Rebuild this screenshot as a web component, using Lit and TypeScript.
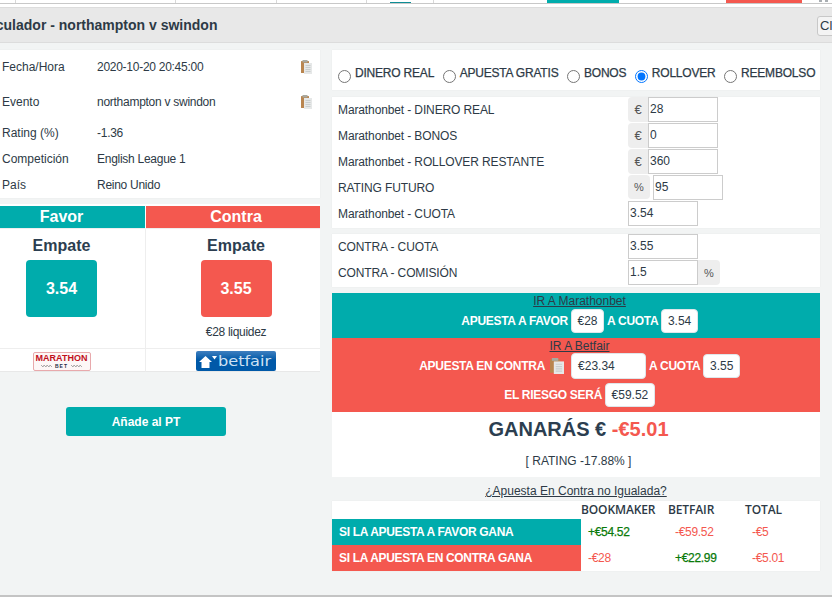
import { LitElement, html, css, svg } from "lit";
import { customElement } from "lit/decorators.js";

const clip = html`<svg class="clip" viewBox="0 0 11 14" width="11" height="14" preserveAspectRatio="none">
  <rect x="0" y="1" width="8" height="12" rx="0.5" fill="#b9854f"></rect>
  <rect x="1.5" y="0" width="5" height="2.5" fill="#a9a9a0"></rect>
  <rect x="3" y="3" width="8" height="11" fill="#e6e8e8"></rect>
  <path d="M4.5 5.5h5M4.5 7.5h5M4.5 9.5h5M4.5 11.5h5" stroke="#c9cdcd" stroke-width="1"></path>
</svg>`;

const arrow = svg`<path d="M1 9 L7.5 3 L14 9 H11.5 V15 H3.5 V9 Z" fill="#fff"></path><path d="M14 3 L19 3 L16.5 6.5 Z" fill="#fff"></path>`;

const wing = html`<svg class="wing" width="11" height="5" viewBox="0 0 11 5">
  <path d="M0 1l2 2 1-2 2 2 1-2 2 2 1-2 2 2" fill="none" stroke="#8a8a8a" stroke-width="0.7"></path>
</svg>`;

@customElement("app-root")
export class AppRoot extends LitElement {
  static styles = css`
    :host {
      display: block;
      width: 832px;
      height: 611px;
      overflow: hidden;
      background: #fff;
      font-family: "Liberation Sans", Arial, sans-serif;
      font-size: 12px;
      color: #2d3a46;
    }
    .strip {
      position: relative;
      height: 3px;
      border-bottom: 1px solid #c8c8c8;
      margin-bottom: 3px;
      overflow: hidden;
    }
    .strip i { position: absolute; top: 0; bottom: 0; }
    .strip .v { width: 1px; background: #d8d8d8; }
    .strip .t { background: #00acac; }
    .strip .d { background: #0e8d95; height: 1px; top: 2px; }
    .strip .r { background: #f4584f; }
    .strip .x { background: #a9aeb2; height: 2px; width: 3px; }
    .modal {
      width: 889px;
      margin-left: -28px;
      height: 590px;
      box-sizing: border-box;
      background: #f2f4f4;
      border-bottom: 2px solid #c4c4c4;
    }
    .head {
      height: 36px;
      box-sizing: border-box;
      background: #e8e8e8;
      border-top: 1px solid #dcdcdc;
      border-bottom: 1px solid #dcdcdc;
      display: flex;
      align-items: center;
      padding-left: 2px;
      justify-content: space-between;
    }
    .title { font-size: 14px; font-weight: bold; color: #2d3a46; white-space: nowrap; }
    .close {
      width: 44px;
      height: 20px;
      margin-top: 1px;
      padding: 0 0 0 2px;
      box-sizing: border-box;
      border: 1px solid #c8c8c8;
      border-radius: 3px;
      background: #f4f4f4;
      font-family: inherit;
      font-size: 13px;
      line-height: 18px;
      text-align: left;
      color: #2d3a46;
      overflow: hidden;
    }
    .cols {
      display: flex;
      gap: 12px;
      padding-top: 7px;
    }
    .left { width: 348px; display: flex; flex-direction: column; }
    .right { width: 488px; display: flex; flex-direction: column; }
    .card { background: #fff; box-shadow: 0 0 1px rgba(0, 0, 0, 0.08); }
    .info {
      height: 148px;
      padding-left: 30px;
      box-sizing: border-box;
      display: grid;
      grid-template-columns: 95px 204px 1fr;
      grid-template-rows: 34px 36px 26px 26px 26px;
      align-items: center;
    }
    .info .val { letter-spacing: -0.27px; }
    .clip { display: block; }
    .bets { margin-top: 6px; display: grid; grid-template-columns: 174px 174px; }
    .bets > div { box-sizing: border-box; }
    .bh {
      height: 25px;
      padding-top: 2px;
      background: #fff;
      border-bottom: 1px solid #eee;
      text-align: center;
    }
    .bh span {
      display: block;
      height: 22px;
      padding-left: 6px;
      line-height: 21px;
      color: #fff;
      font-size: 16px;
      font-weight: bold;
    }
    .bh.fav span { background: #00acac; }
    .bh.con span { background: #f4584f; }
    .bh.fav { border-right: 1px solid #fff; }
    .bb {
      height: 120px;
      padding-left: 6px;
      display: flex;
      flex-direction: column;
      align-items: center;
      background: #fff;
      border-bottom: 1px solid #eee;
    }
    .bb.fav, .bl.fav { border-right: 1px solid #eee; }
    .name { font-size: 16px; font-weight: bold; line-height: 18px; margin-top: 8px; color: #2c3e50; }
    .odd {
      width: 71px;
      height: 57px;
      margin-top: 5px;
      border-radius: 4px;
      color: #fff;
      font-size: 16px;
      font-weight: bold;
      display: flex;
      align-items: center;
      justify-content: center;
    }
    .odd.t { background: #00acac; }
    .odd.r { background: #f4584f; }
    .liq { margin-top: 8px; letter-spacing: -0.3px; }
    .bl {
      height: 23px;
      padding: 2px 0 0 6px;
      display: flex;
      justify-content: center;
      background: #fff;
      border-bottom: 1px solid #e8e8e8;
    }
    .bl.fav { padding-top: 3px; }
    .mara {
      width: 58px;
      height: 19px;
      box-sizing: border-box;
      border: 1px solid #e8a9ac;
      border-radius: 2px;
      background: #fdf7f7;
      text-align: center;
      color: #c10f1c;
      font-size: 9px;
      line-height: 9px;
      font-weight: bold;
      padding-top: 1px;
      overflow: hidden;
      white-space: nowrap;
    }
    .mara small {
      display: flex;
      justify-content: center;
      align-items: center;
      gap: 3px;
      color: #26304a;
      font-size: 5px;
      line-height: 6px;
      letter-spacing: 1px;
    }
    .bf {
      width: 80px;
      height: 20px;
      border-radius: 2px;
      background: linear-gradient(#3f7fbf 0, #0059a8 45%, #0059a8 100%);
      display: flex;
      align-items: center;
      padding-left: 2px;
      box-sizing: border-box;
      gap: 0;
      overflow: hidden;
    }
    .bf span {
      color: #cfe2f4;
      font-family: "DejaVu Sans", sans-serif;
      font-size: 14px;
      line-height: 20px;
      transform: scaleX(1.15);
      transform-origin: left center;
    }
    .add {
      align-self: center;
      width: 160px;
      height: 29px;
      margin-top: 35px;
      background: #00acac;
      border-radius: 3px;
      color: #fff;
      font-weight: bold;
      display: flex;
      align-items: center;
      justify-content: center;
    }
    .radios {
      height: 40px;
      box-sizing: border-box;
      padding: 16px 0 0 6px;
      display: flex;
      white-space: nowrap;
    }
    .radios label {
      display: flex;
      align-items: flex-start;
      margin-right: 8.5px;
      -webkit-text-stroke: 0.25px;
      letter-spacing: -0.2px;
    }
    .radios input { margin: 4px 4px 0 0; width: 13px; height: 13px; flex: none; }
    .fields { margin-top: 7px; padding-bottom: 1px; }
    .fields.second { margin-top: 6px; }
    .row { height: 26px; display: flex; align-items: flex-start; padding-left: 6px; }
    .row .lab { width: 290px; line-height: 26px; letter-spacing: -0.12px; }
    .adn {
      height: 25px;
      box-sizing: border-box;
      background: #eee;
      color: #555;
      display: flex;
      align-items: center;
      justify-content: center;
      border-radius: 4px 0 0 4px;
    }
    .adn.e { width: 20px; font-size: 13px; }
    .adn.p { width: 22px; font-size: 11px; border-radius: 4px; margin-right: 3px; height: 24px; }
    .adn.pr { width: 22px; font-size: 11px; border-radius: 0 4px 4px 0; }
    .inp {
      width: 70px;
      height: 25px;
      box-sizing: border-box;
      border: 1px solid #ccc;
      background: #fff;
      padding: 0 0 2px 1px;
      font: inherit;
      color: #2d3a46;
      margin: 0;
      outline: none;
    }
    .band { margin-top: 6px; text-align: center; }
    .band a {
      color: #2d3a46;
      text-decoration: underline;
      display: block;
      line-height: 14px;
      padding: 1px 0 0 7px;
      margin-bottom: -1px;
    }
    .band .t { background: #00acac; height: 45px; box-sizing: border-box; }
    .band .r { background: #f4584f; height: 74px; box-sizing: border-box; }
    .line {
      display: flex;
      justify-content: center;
      align-items: center;
      gap: 3px;
      padding-left: 7px;
      color: #fff;
      font-weight: bold;
      letter-spacing: -0.28px;
    }
    .t .line { margin-top: 2px; height: 24px; }
    .r .line.a { margin-top: 1px; height: 26px; }
    .r .line.b { margin-top: 4px; height: 24px; }
    .pill {
      height: 24px;
      box-sizing: border-box;
      border: 1px solid #dfe6ea;
      border-radius: 4px;
      background: #fff;
      color: #2d3a46;
      font-weight: normal;
      letter-spacing: 0;
      display: flex;
      align-items: center;
      justify-content: center;
      padding: 0 5.5px;
    }
    .pill.w { width: 75px; height: 26px; justify-content: flex-start; padding: 0 0 0 6px; margin-left: 4px; }
    .line .clip { width: 14px; height: 16px; margin-left: 2px; }
    .res { height: 65px; background: #fff; text-align: center; padding-left: 5px; }
    .gan { font-size: 20px; font-weight: bold; line-height: 24px; padding-top: 5px; color: #2c3e50; }
    .gan em { font-style: normal; color: #f4584f; }
    .rat { line-height: 14px; margin-top: 13px; }
    .q { margin-top: 7px; text-align: center; line-height: 14px; }
    .q a { color: #2d3a46; text-decoration: underline; }
    .tab {
      margin-top: 3px;
      display: grid;
      grid-template-columns: 249px 87px 74px 1fr;
      grid-template-rows: 18px 26px 26px;
      align-items: center;
    }
    .tab .h {
      font-family: "Open Sans", sans-serif;
      font-weight: 600;
      font-size: 12px;
      line-height: 18px;
      letter-spacing: -0.12px;
      white-space: nowrap;
    }
    .tab .l {
      height: 100%;
      display: flex;
      align-items: center;
      padding-left: 7px;
      box-sizing: border-box;
      color: #fff;
      font-weight: bold;
      letter-spacing: -0.32px;
    }
    .tab .l.t { background: #00acac; }
    .tab .l.r { background: #f4584f; }
    .tab .v { padding-left: 7px; letter-spacing: -0.3px; }
    .tab .v.third { padding-left: 10px; }
    .pos { color: #0a7a0a; -webkit-text-stroke: 0.25px; }
    .neg { color: #f4584f; }
  `;

  private row(label: string, value: string, kind: string) {
    return html`<div class="row">
      <span class="lab">${label}</span>
      ${kind === "e" ? html`<span class="adn e">€</span>` : ""}
      ${kind === "p" ? html`<span class="adn p">%</span>` : ""}
      <input class="inp" .value=${value} />
      ${kind === "pr" ? html`<span class="adn pr">%</span>` : ""}
    </div>`;
  }

  render() {
    return html`
      <div class="strip">
        <i class="v" style="left:15px"></i><i class="v" style="left:175px"></i>
        <i class="v" style="left:276px"></i><i class="v" style="left:366px"></i>
        <i class="v" style="left:433px"></i><i class="d" style="left:390px;width:21px"></i>
        <i class="t" style="left:547px;width:72px"></i><i class="r" style="left:726px;width:76px"></i>
        <i class="x" style="left:819px"></i><i class="x" style="left:825px"></i>
      </div>
      <div class="modal">
        <div class="head">
          <span class="title">Calculador - northampton v swindon</span>
          <button class="close">Close</button>
        </div>
        <div class="cols">
          <div class="left">
            <div class="card info">
              <span>Fecha/Hora</span><span class="val">2020-10-20 20:45:00</span>${clip}
              <span>Evento</span><span class="val">northampton v swindon</span>${clip}
              <span>Rating (%)</span><span class="val">-1.36</span><span></span>
              <span>Competición</span><span class="val">English League 1</span><span></span>
              <span>País</span><span class="val">Reino Unido</span><span></span>
            </div>
            <div class="bets">
              <div class="bh fav"><span>Favor</span></div>
              <div class="bh con"><span>Contra</span></div>
              <div class="bb fav">
                <div class="name">Empate</div>
                <div class="odd t">3.54</div>
              </div>
              <div class="bb">
                <div class="name">Empate</div>
                <div class="odd r">3.55</div>
                <div class="liq">€28 liquidez</div>
              </div>
              <div class="bl fav"><div class="mara">MARATHON<small>${wing}BET${wing}</small></div></div>
              <div class="bl">
                <div class="bf">
                  <svg width="20" height="17" viewBox="0 0 20 17">${arrow}</svg>
                  <span>betfair</span>
                </div>
              </div>
            </div>
            <div class="add">Añade al PT</div>
          </div>
          <div class="right">
            <div class="card radios">
              <label><input type="radio" name="k" />DINERO REAL</label>
              <label><input type="radio" name="k" />APUESTA GRATIS</label>
              <label><input type="radio" name="k" />BONOS</label>
              <label><input type="radio" name="k" checked />ROLLOVER</label>
              <label><input type="radio" name="k" />REEMBOLSO</label>
            </div>
            <div class="card fields">
              ${this.row("Marathonbet - DINERO REAL", "28", "e")}
              ${this.row("Marathonbet - BONOS", "0", "e")}
              ${this.row("Marathonbet - ROLLOVER RESTANTE", "360", "e")}
              ${this.row("RATING FUTURO", "95", "p")}
              ${this.row("Marathonbet - CUOTA", "3.54", "")}
            </div>
            <div class="card fields second">
              ${this.row("CONTRA - CUOTA", "3.55", "")}
              ${this.row("CONTRA - COMISIÓN", "1.5", "pr")}
            </div>
            <div class="band">
              <div class="t">
                <a href="#">IR A Marathonbet</a>
                <div class="line">APUESTA A FAVOR <span class="pill">€28</span> A CUOTA <span class="pill">3.54</span></div>
              </div>
              <div class="r">
                <a href="#">IR A Betfair</a>
                <div class="line a">APUESTA EN CONTRA ${clip}<span class="pill w">€23.34</span> A CUOTA <span class="pill">3.55</span></div>
                <div class="line b">EL RIESGO SERÁ <span class="pill">€59.52</span></div>
              </div>
              <div class="res">
                <div class="gan">GANARÁS € <em>-€5.01</em></div>
                <div class="rat">[ RATING -17.88% ]</div>
              </div>
            </div>
            <div class="q"><a href="#">¿Apuesta En Contra no Igualada?</a></div>
            <div class="card tab">
              <span></span><span class="h">BOOKMAKER</span><span class="h">BETFAIR</span><span class="h">&nbsp;TOTAL</span>
              <div class="l t">SI LA APUESTA A FAVOR GANA</div>
              <span class="v pos">+€54.52</span><span class="v neg">-€59.52</span><span class="v third neg">-€5</span>
              <div class="l r">SI LA APUESTA EN CONTRA GANA</div>
              <span class="v neg">-€28</span><span class="v pos">+€22.99</span><span class="v third neg">-€5.01</span>
            </div>
          </div>
        </div>
      </div>
    `;
  }
}
